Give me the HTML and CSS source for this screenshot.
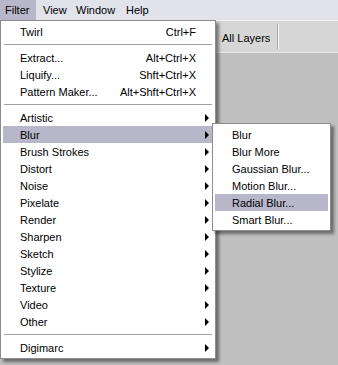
FILE: index.html
```html
<!DOCTYPE html>
<html lang="en">

<head>
    <meta charset="UTF-8">
    <title>Filter Menu</title>
    <link rel="stylesheet" href="styles.css">
</head>

<body>
    <div class="app">
        <div class="menubar">
            <span class="menubar-item filter active">Filter</span>
            <span class="menubar-item view">View</span>
            <span class="menubar-item window">Window</span>
            <span class="menubar-item help">Help</span>
        </div>
        <div class="toolbar">
            <span class="toolbar-label">All Layers</span>
            <span class="toolbar-sep"></span>
        </div>
        <div class="workspace"></div>

        <div class="menu">
            <div class="item"><span class="label">Twirl</span><span class="key">Ctrl+F</span></div>
            <div class="sep"></div>
            <div class="item"><span class="label">Extract...</span><span class="key">Alt+Ctrl+X</span></div>
            <div class="item"><span class="label">Liquify...</span><span class="key">Shft+Ctrl+X</span></div>
            <div class="item"><span class="label">Pattern Maker...</span><span class="key">Alt+Shft+Ctrl+X</span></div>
            <div class="sep"></div>
            <div class="item sub"><span class="label">Artistic</span></div>
            <div class="item sub hover"><span class="label">Blur</span></div>
            <div class="item sub"><span class="label">Brush Strokes</span></div>
            <div class="item sub"><span class="label">Distort</span></div>
            <div class="item sub"><span class="label">Noise</span></div>
            <div class="item sub"><span class="label">Pixelate</span></div>
            <div class="item sub"><span class="label">Render</span></div>
            <div class="item sub"><span class="label">Sharpen</span></div>
            <div class="item sub"><span class="label">Sketch</span></div>
            <div class="item sub"><span class="label">Stylize</span></div>
            <div class="item sub"><span class="label">Texture</span></div>
            <div class="item sub"><span class="label">Video</span></div>
            <div class="item sub"><span class="label">Other</span></div>
            <div class="sep"></div>
            <div class="item sub"><span class="label">Digimarc</span></div>

            <div class="menu submenu">
                <div class="item"><span class="label">Blur</span></div>
                <div class="item"><span class="label">Blur More</span></div>
                <div class="item"><span class="label">Gaussian Blur...</span></div>
                <div class="item"><span class="label">Motion Blur...</span></div>
                <div class="item hover"><span class="label">Radial Blur...</span></div>
                <div class="item"><span class="label">Smart Blur...</span></div>
            </div>
        </div>
    </div>
</body>
</html>
```

FILE: styles.css
```css
body {
    margin: 0;
    font-family: "Liberation Sans", Arial, sans-serif;
    font-size: 11px;
    color: #000;
    background: #c0c0c0;
}

.app {
    position: relative;
    width: 338px;
    height: 365px;
    display: flex;
    flex-direction: column;
    overflow: hidden;
}

.menubar {
    height: 20px;
    display: flex;
    background: #e1e2ea;
    border-bottom: 1px solid #f2f2f6;
}

.menubar-item {
    display: flex;
    align-items: center;
    box-sizing: border-box;
}

.menubar-item.filter {
    width: 36px;
    padding-left: 5px;
}

.menubar-item.view {
    width: 40px;
    padding-left: 7px;
}

.menubar-item.window {
    width: 50px;
}

.menubar-item.active {
    background: #b8b7c9;
}

.toolbar {
    height: 31px;
    display: flex;
    align-items: center;
    padding-left: 222px;
    background: #d6d6d6;
    border-bottom: 1px solid #e8e8e8;
}

.toolbar-label {
    margin-top: 2px;
}

.toolbar-sep {
    width: 1px;
    height: 25px;
    margin-left: 7px;
    background: #a8a8a8;
    border-right: 1px solid #f4f4f4;
}

.workspace {
    flex: 1;
    background: #c0c0c0;
}

.menu {
    position: absolute;
    left: 0;
    top: 20px;
    width: 210px;
    padding: 2px;
    background: #fff;
    border: 1px solid #8c8c8c;
    box-shadow: 3px 3px 3px rgba(0, 0, 0, 0.45);
}

.item {
    position: relative;
    height: 17px;
    display: flex;
    align-items: center;
    padding: 0 17px;
}

.item .label {
    flex: 1;
    white-space: nowrap;
}

.item.hover {
    background: #b8b7c9;
}

.item.sub::after {
    content: "";
    position: absolute;
    right: 4px;
    top: 5px;
    border-left: 4px solid #000;
    border-top: 4px solid transparent;
    border-bottom: 4px solid transparent;
}

.sep {
    height: 9px;
    display: flex;
    align-items: center;
}

.sep::before {
    content: "";
    flex: 1;
    height: 1px;
    margin: 0 1px;
    background: #a0a0a0;
}

.submenu {
    left: 211px;
    top: 102px;
    width: 113px;
}
```
